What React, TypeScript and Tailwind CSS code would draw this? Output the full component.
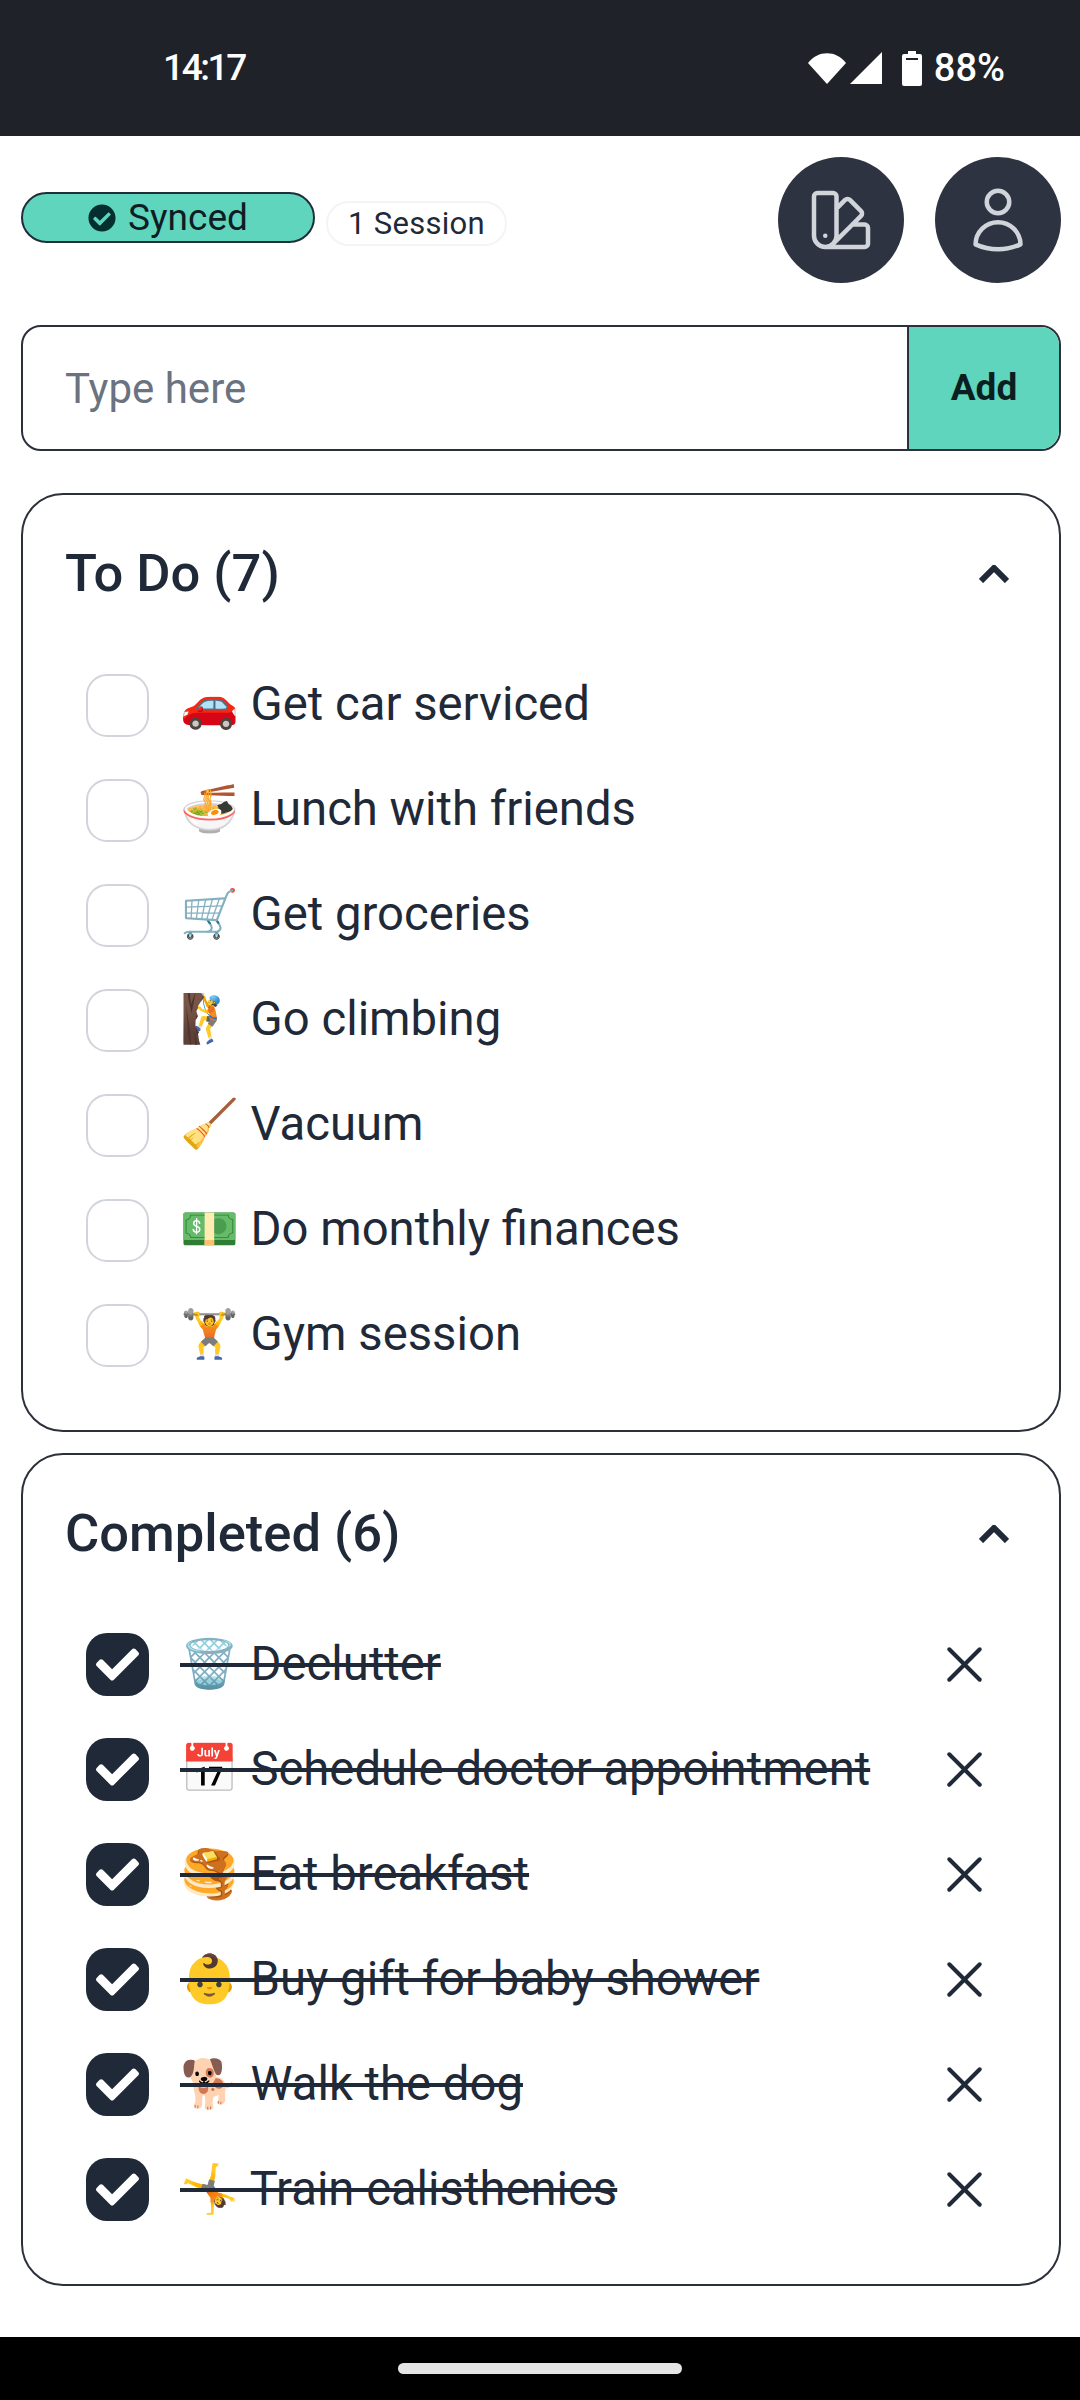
import { X } from 'lucide-react';
import { FaCheck, FaCheckCircle } from 'react-icons/fa';
import { HiOutlineSwatch, HiOutlineUser } from 'react-icons/hi2';

const todo = [
    '🚗 Get car serviced',
    '🍜 Lunch with friends',
    '🛒 Get groceries',
    '🧗 Go climbing',
    '🧹 Vacuum',
    '💵 Do monthly finances',
    '🏋️ Gym session',
];

const completed = [
    '🗑️ Declutter',
    '📅 Schedule doctor appointment',
    '🥞 Eat breakfast',
    '👶 Buy gift for baby shower',
    '🐕 Walk the dog',
    '🤸 Train calisthenics',
];

function CardHeader({ title }: { title: string }) {
    return (
        <div className="flex h-[158px] items-center justify-between">
            <p className="mb-[2px] text-[52.5px] font-medium text-[#1f2937]">{title}</p>
            <svg className="mr-[8px] h-[18px] w-[30px]" viewBox="0 0 30 18" fill="none">
                <path d="M2 16 L15 3 L28 16" stroke="#1f2937" strokeWidth="6" />
            </svg>
        </div>
    );
}

export default function App() {
    return (
        <div className="flex h-[2400px] w-[1080px] flex-col bg-white font-['Roboto','Noto_Color_Emoji',sans-serif]">
            <div className="flex h-[136px] shrink-0 items-center justify-between bg-[#1f2229] pl-[163px] pr-[75px] text-white">
                <p className="text-[37px] font-medium tracking-[-2.4px]">14:17</p>
                <div className="flex items-center">
                    <svg className="h-[34px] w-[40px]" viewBox="0 0 40 34" fill="white">
                        <path d="M1 12 C11 -1 29 -1 39 12 L20 33 Z" />
                    </svg>
                    <svg className="ml-[2px] h-[34px] w-[34px]" viewBox="0 0 34 34" fill="white">
                        <path d="M33 1 V33 H1 Z" />
                    </svg>
                    <svg className="ml-[19px] h-[35px] w-[20px]" viewBox="0 0 20 35" fill="white">
                        <path d="M6 0 H14 V3 H18 Q20 3 20 5 V33 Q20 35 18 35 H2 Q0 35 0 33 V5 Q0 3 2 3 H6 Z" />
                        <rect x="4" y="7" width="12" height="2" fill="#1f2229" />
                    </svg>
                    <p className="ml-[12px] text-[38px] font-medium">88%</p>
                </div>
            </div>

            <div className="flex flex-1 flex-col pl-[21px] pr-[19px] pt-[21px]">
                <div className="flex h-[126px] items-center">
                    <div className="mb-[5px] flex h-[51px] w-[294px] items-center justify-center gap-[12px] rounded-full border-2 border-[#1f2f3a] bg-[#60d5bd] text-[37px] text-[#0f1c24]">
                        <FaCheckCircle className="h-[28px] w-[28px] text-[#042f2e]" />
                        <span>Synced</span>
                    </div>
                    <div className="ml-[11px] mt-[7px] flex h-[45px] w-[181px] items-center justify-center rounded-full border-2 border-[#f3f4f6] pt-[2px] text-[31px] tracking-[0.3px] text-[#1f2937]">
                        1 Session
                    </div>
                    <button className="ml-auto flex h-[126px] w-[126px] items-center justify-center rounded-full bg-[#2d3340]">
                        <HiOutlineSwatch className="h-[72px] w-[72px] text-[#d1d5db]" />
                    </button>
                    <button className="ml-[31px] flex h-[126px] w-[126px] items-center justify-center rounded-full bg-[#2d3340]">
                        <HiOutlineUser className="h-[72px] w-[72px] text-[#d1d5db]" />
                    </button>
                </div>

                <div className="mt-[42px] flex h-[126px] overflow-hidden rounded-[20px] border-2 border-[#2b303b]">
                    <p className="flex flex-1 items-center pl-[42px] text-[42px] text-[#6b7280]">Type here</p>
                    <div className="flex w-[152px] items-center justify-center border-l-2 border-[#2b303b] bg-[#60d5bd] text-[37px] font-bold text-[#0b1f1f]">
                        Add
                    </div>
                </div>

                <div className="mt-[42px] h-[939px] rounded-[42px] border-2 border-[#2b303b] px-[42px]">
                    <CardHeader title="To Do (7)" />
                    {todo.map((item) => (
                        <div key={item} className="flex h-[105px] items-center pl-[21px]">
                            <div className="h-[63px] w-[63px] rounded-[21px] border-2 border-[#d1d5db]" />
                            <p className="mb-[2px] ml-[31px] text-[47.25px] text-[#1f2937]">{item}</p>
                        </div>
                    ))}
                </div>

                <div className="mt-[21px] h-[833px] rounded-[42px] border-2 border-[#2b303b] px-[42px]">
                    <CardHeader title="Completed (6)" />
                    <div className="-mt-[1px]">
                        {completed.map((item) => (
                            <div key={item} className="flex h-[105px] items-center pl-[21px]">
                                <div className="flex h-[63px] w-[63px] items-center justify-center rounded-[21px] bg-[#1f2937]">
                                    <FaCheck className="h-[43px] w-[43px] text-white" />
                                </div>
                                <p className="ml-[31px] text-[47.25px] text-[#1f2937] line-through">{item}</p>
                                <X className="ml-auto mr-[22px] text-[#1f2937]" size={61} strokeWidth={1.57} />
                            </div>
                        ))}
                    </div>
                </div>
            </div>

            <div className="flex h-[63px] shrink-0 items-center justify-center bg-black">
                <div className="mb-[1px] h-[11px] w-[284px] rounded-full bg-[#e5e5e5]" />
            </div>
        </div>
    );
}
